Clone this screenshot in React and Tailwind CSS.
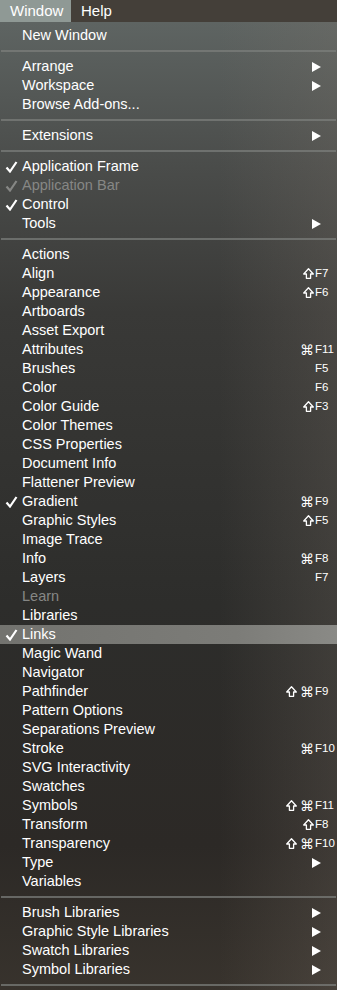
import React from "react";

const SEP = "sep";

const items = [
  { label: "New Window" },
  SEP,
  { label: "Arrange", sub: true },
  { label: "Workspace", sub: true },
  { label: "Browse Add-ons..." },
  SEP,
  { label: "Extensions", sub: true },
  SEP,
  { label: "Application Frame", check: true },
  { label: "Application Bar", check: true, disabled: true },
  { label: "Control", check: true },
  { label: "Tools", sub: true },
  SEP,
  { label: "Actions" },
  { label: "Align", mods: "s", k: "F7" },
  { label: "Appearance", mods: "s", k: "F6" },
  { label: "Artboards" },
  { label: "Asset Export" },
  { label: "Attributes", mods: "c", k: "F11" },
  { label: "Brushes", k: "F5" },
  { label: "Color", k: "F6" },
  { label: "Color Guide", mods: "s", k: "F3" },
  { label: "Color Themes" },
  { label: "CSS Properties" },
  { label: "Document Info" },
  { label: "Flattener Preview" },
  { label: "Gradient", check: true, mods: "c", k: "F9" },
  { label: "Graphic Styles", mods: "s", k: "F5" },
  { label: "Image Trace" },
  { label: "Info", mods: "c", k: "F8" },
  { label: "Layers", k: "F7" },
  { label: "Learn", disabled: true },
  { label: "Libraries" },
  { label: "Links", check: true, active: true },
  { label: "Magic Wand" },
  { label: "Navigator" },
  { label: "Pathfinder", mods: "sc", k: "F9" },
  { label: "Pattern Options" },
  { label: "Separations Preview" },
  { label: "Stroke", mods: "c", k: "F10" },
  { label: "SVG Interactivity" },
  { label: "Swatches" },
  { label: "Symbols", mods: "sc", k: "F11" },
  { label: "Transform", mods: "s", k: "F8" },
  { label: "Transparency", mods: "sc", k: "F10" },
  { label: "Type", sub: true },
  { label: "Variables" },
  SEP,
  { label: "Brush Libraries", sub: true },
  { label: "Graphic Style Libraries", sub: true },
  { label: "Swatch Libraries", sub: true },
  { label: "Symbol Libraries", sub: true },
  SEP,
];

const Arrow = () => (
  <svg width="9" height="10" viewBox="0 0 9 10" className="mr-[16px]">
    <path d="M0 0 L9 5 L0 10 Z" fill="white" />
  </svg>
);

const Check = ({ color }) => (
  <svg width="13" height="12" viewBox="0 0 13 12">
    <path d="M1.5 6.5 L5 10.5 L11.5 1" fill="none" stroke={color} strokeWidth="2.2" />
  </svg>
);

const Shift = ({ gap }) => (
  <svg width="11" height="11" viewBox="0 0 11 11" className={gap ? "mr-[3px]" : "mr-[1px]"}>
    <path
      d="M5.5 0.8 L10.3 6 L7.6 6 L7.6 10.3 L3.4 10.3 L3.4 6 L0.7 6 Z"
      fill="none"
      stroke="white"
      strokeWidth="1.3"
      strokeLinejoin="round"
    />
  </svg>
);

const Row = ({ label, check, disabled, sub, mods, k, active }) => (
  <div
    className={`flex items-center h-[19px] ${
      active ? "bg-[linear-gradient(to_right,#73736f,#7c7c78_70%,#8a8a86)]" : ""
    } ${disabled ? "text-[#868785]" : "text-white"}`}
  >
    <span className="w-[22px] pl-[5px] flex items-center">
      {check && <Check color={disabled ? "#868785" : "white"} />}
    </span>
    <span className="flex-1 text-[14.5px] leading-none">{label}</span>
    {sub && <Arrow />}
    {k && (
      <span className="flex items-center text-[11.5px] leading-none">
        <span className="flex items-center justify-end">
          {mods?.includes("s") && <Shift gap={mods.includes("c")} />}
          {mods?.includes("c") && (
            <span className="font-['DejaVu_Sans'] text-[14px] leading-none mr-[1px]">⌘</span>
          )}
        </span>
        <span className="w-[22px]">{k}</span>
      </span>
    )}
  </div>
);

export default function App() {
  return (
    <div className="w-[337px] h-[990px] overflow-hidden font-['Liberation_Sans',sans-serif] flex flex-col">
      <div className="h-[22px] flex items-center bg-[#443f39] text-white text-[15px]">
        <span className="h-full w-[71px] flex items-center pl-[10px] bg-[#8f9995]">Window</span>
        <span className="pl-[10px]">Help</span>
      </div>
      <div className="flex-1 pt-[4px] bg-[linear-gradient(to_right,rgba(0,0,0,0)_65%,rgba(130,120,110,0.22)),linear-gradient(to_bottom,#5e6462,#4a4c4a_15%,#393937_30%,#2d2d2b_60%,#2c2926_85%,#38332d)]">
        {items.map((it, i) =>
          it === SEP ? (
            <div key={i} className="h-[12px] flex items-center px-[1px]">
              <div className="h-[2px] w-full bg-[#7d807d]/70" />
            </div>
          ) : (
            <Row key={i} {...it} />
          )
        )}
      </div>
    </div>
  );
}
